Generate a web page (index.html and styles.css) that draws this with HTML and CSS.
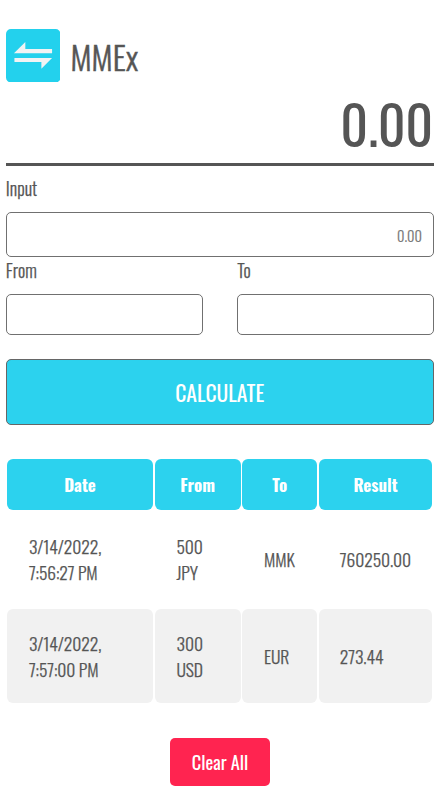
FILE: index.html
```html
<!DOCTYPE html>
<html lang="en">
<head>
<meta charset="utf-8">
<title>MMEx</title>
<link rel="stylesheet" href="styles.css">
</head>
<body>
<main class="app">
  <header class="brand">
    <svg class="logo" viewBox="0 0 55 54" aria-hidden="true">
      <rect width="55" height="54" rx="5" fill="#23d1ed"/>
      <path d="M8 24.5L19.5 13V20.3H46.5V24.5ZM46.5 29.2H8.5V33.3H35.7V40Z" fill="#f1f3f4"/>
    </svg>
    <h1 class="title">MMEx</h1>
  </header>
  <output class="display">0.00</output>
  <form class="form">
    <label class="label">Input</label>
    <div class="field amount">0.00</div>
    <div class="pair">
      <div>
        <label class="label">From</label>
        <div class="field"></div>
      </div>
      <div>
        <label class="label">To</label>
        <div class="field"></div>
      </div>
    </div>
    <button class="calculate" type="button">CALCULATE</button>
  </form>
  <section class="history">
    <div class="row head">
      <div>Date</div><div>From</div><div>To</div><div>Result</div>
    </div>
    <div class="row">
      <div>3/14/2022,<br>7:56:27 PM</div><div>500<br>JPY</div><div>MMK</div><div>760250.00</div>
    </div>
    <div class="row shaded">
      <div>3/14/2022,<br>7:57:00 PM</div><div>300<br>USD</div><div>EUR</div><div>273.44</div>
    </div>
  </section>
  <button class="clear" type="button">Clear All</button>
</main>
</body>
</html>
```
FILE: styles.css
```css
* { box-sizing: border-box; }
html { overflow: hidden; }
body { margin: 0; background: #fff; color: #555; font-family: Oswald, Roboto, sans-serif; font-weight: 300; }
button { font-family: inherit; padding: 0; display: flex; align-items: center; justify-content: center; color: #fff; }
.app { padding: 28.5px 8px 0 5.5px; height: 788px; overflow: hidden; }
.brand { display: flex; height: 53.5px; align-items: center; gap: 10.5px; }
.logo { width: 54.5px; height: 53.5px; display: block; }
.title { margin: 1px 0 0; font-size: 32.8px; line-height: 50px; font-weight: 300; -webkit-text-stroke: .5px; }
.display { display: flex; justify-content: flex-end; align-items: center; height: 83.5px; border-bottom: 3.5px solid #555; font-size: 54px; font-weight: 400; letter-spacing: -.3px; padding: 2px 1px 0 0; line-height: 74px; }
.label { display: flex; align-items: center; height: 26px; font-size: 18px; padding-left: .3px; -webkit-text-stroke: .25px; }
.form { padding-top: 9.5px; }
.field { border: 1px solid #707070; border-radius: 5px; height: 41px; margin-top: 11.3px; }
.amount { height: 45px; display: flex; justify-content: flex-end; align-items: center; padding: 1.5px 11px 0; font-size: 14.4px; color: #757575; -webkit-text-stroke: .2px; }
.pair { display: grid; grid-template-columns: 197px 197px; justify-content: space-between; }
.pair .field { margin-top: 10.7px; }
.calculate { width: 100%; height: 66px; margin-top: 24px; background: #2cd2ee; border: 1px solid #666; border-radius: 5px; font-size: 21.6px; }
.history { display: grid; gap: 2px; margin: 34.2px 1px 0 1.5px; }
.row { display: grid; grid-template-columns: 146px 86px 75px 113.5px; gap: 1.6px; height: 94.5px; font-size: 17.6px; letter-spacing: -.08px; line-height: 26px; -webkit-text-stroke: .25px; }
.row > div { display: flex; align-items: center; padding-left: 21.9px; border-radius: 6px; }
.row > div:nth-child(4) { padding-left: 21px; }
.row.head { height: 51px; font-size: 17px; letter-spacing: 0; font-weight: 700; color: #fff; -webkit-text-stroke: 0; }
.row.head > div { justify-content: center; padding: 1px 0 0; background: #2cd2ee; }
.shaded > div { background: #f1f1f1; }
.clear { width: 100px; height: 48px; margin: 34.8px auto 0 164.5px; border: 0; border-radius: 5px; background: #ff2450; font-size: 18.4px; }
```
